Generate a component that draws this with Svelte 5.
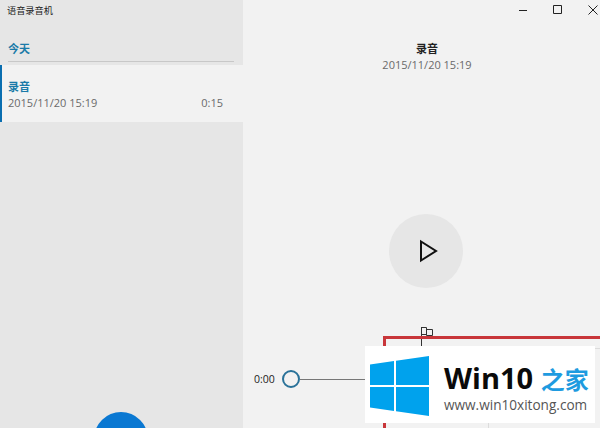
<script>
	const stamp = '2015/11/20 15:19';
</script>

<div class="app">
	<aside class="side">
		<div class="app-title">语音录音机</div>
		<div class="group">今天</div>
		<div class="item">
			<div class="item-name">录音</div>
			<div class="item-meta">
				<span>{stamp}</span>
				<span>0:15</span>
			</div>
		</div>
		<div class="record"></div>
	</aside>

	<main class="main">
		<div class="win-buttons">
			<svg width="12" height="12" viewBox="0 0 12 12"><path d="M2 6.500h8" stroke="#222" fill="none" /></svg>
			<svg width="12" height="12" viewBox="0 0 12 12"><path d="M1.500 1.500h8v8h-8z" stroke="#222" fill="none" /></svg>
			<svg width="12" height="12" viewBox="0 0 12 12"><path d="M1.500 1.500l9 9M10.500 1.500l-9 9" stroke="#222" fill="none" /></svg>
		</div>
		<div class="title">录音</div>
		<div class="date">{stamp}</div>
		<div class="play">
			<svg width="20" height="24" viewBox="0 0 20 24"><path d="M3 2.500v19L18 12z" stroke="#111" stroke-width="2" fill="none" /></svg>
		</div>
		<div class="timeline">
			<span class="time">0:00</span>
			<span class="knob"></span>
			<span class="line"></span>
		</div>
		<svg class="flag" width="14" height="20" viewBox="0 0 14 20"><path d="M1.500 1v19M1.500 1.500h5v7h-5M6.500 3.500h6v6h-6z" stroke="#333" fill="none" /></svg>
		<div class="selection">
			<div class="wave"></div>
		</div>
	</main>

	<div class="mark">
		<svg class="logo" width="60" height="60" viewBox="0 0 60 60">
			<path d="M0 8.500l24-3.500v24H0zM26 4.700L59 0v29H26zM0 31h24v24L0 51.500zM26 31h33v29l-33-4.700z" fill="#00a2ed" />
		</svg>
		<div class="mark-text">
			<div class="mark-name">Win10 <span>之家</span></div>
			<div class="mark-url">www.win10xitong.com</div>
		</div>
	</div>
</div>

<style>
	:global(body) {
		margin: 0;
	}

	.app {
		position: relative;
		display: grid;
		grid-template-columns: 243px 1fr;
		width: 600px;
		height: 428px;
		overflow: hidden;
		font-family: "Open Sans", "Noto Sans CJK SC", sans-serif;
		background: #f2f2f2;
	}

	.side {
		position: relative;
		background: #e6e6e6;
	}

	.app-title {
		padding: 3px 0 0 7px;
		height: 15px;
		font-size: 9.200px;
		line-height: 15px;
		color: #222;
	}

	.group {
		margin: 23px 9px 0 8px;
		height: 20px;
		border-bottom: 1px solid #c8c8c8;
		font-size: 11px;
		font-weight: 700;
		line-height: 16px;
		color: #1a7aa8;
	}

	.item {
		margin-top: 3px;
		height: 57px;
		padding: 13px 20px 0 6px;
		box-sizing: border-box;
		border-left: 2px solid #0a6eb0;
		background: #f2f2f2;
	}

	.item-name {
		font-size: 11px;
		font-weight: 700;
		line-height: 17px;
		color: #1a7aa8;
	}

	.item-meta {
		display: flex;
		justify-content: space-between;
		font-size: 11px;
		line-height: 16px;
		color: #6a6a6a;
	}

	.record {
		position: absolute;
		left: 94px;
		top: 412px;
		width: 54px;
		height: 54px;
		border-radius: 50%;
		background: #0a78d2;
	}

	.main {
		position: relative;
		display: flex;
		flex-direction: column;
		align-items: center;
	}

	.win-buttons {
		align-self: flex-end;
		display: flex;
		gap: 23px;
		padding: 4px 1px 0 0;
		height: 14px;
	}

	.title {
		margin: 23px 0 0 11px;
		font-size: 11px;
		font-weight: 700;
		line-height: 16px;
		color: #222;
	}

	.date {
		margin-left: 11px;
		font-size: 11px;
		line-height: 16px;
		color: #6a6a6a;
	}

	.play {
		display: flex;
		align-items: center;
		justify-content: center;
		margin: 141px 0 0 9px;
		width: 74px;
		height: 74px;
		border-radius: 50%;
		background: #e6e6e6;
		padding-left: 4px;
		box-sizing: border-box;
	}

	.timeline {
		align-self: stretch;
		display: flex;
		align-items: center;
		margin-top: 81px;
		padding: 0 100px 0 11px;
		height: 20px;
	}

	.time {
		width: 28px;
		font-size: 10.500px;
		color: #222;
	}

	.knob {
		width: 14px;
		height: 14px;
		border: 2px solid #2a7299;
		border-radius: 50%;
	}

	.line {
		flex: 1;
		height: 1px;
		background: #777;
	}

	.flag {
		position: absolute;
		left: 177px;
		top: 326px;
	}

	.selection {
		position: absolute;
		left: 140px;
		top: 336px;
		width: 300px;
		height: 140px;
		border: 3px solid #c8363a;
		box-sizing: border-box;
	}

	.wave {
		margin: 9px 0 0 102px;
		height: 100px;
		border-top: 1px solid #dcdcdc;
		border-left: 1px solid #dcdcdc;
	}

	.mark {
		position: absolute;
		left: 365px;
		top: 346px;
		display: flex;
		align-items: center;
		gap: 14px;
		box-sizing: border-box;
		width: 230px;
		height: 77px;
		padding-left: 5px;
		background: #fff;
	}

	.logo {
		flex: none;
		margin-top: 2px;
	}

	.mark-text {
		margin-top: 5px;
	}

	.mark-name {
		font-size: 29px;
		font-weight: 700;
		line-height: 34px;
		color: #0a0a0a;
		white-space: nowrap;
	}

	.mark-name span {
		color: #1e9be0;
		font-size: 24px;
	}

	.mark-url {
		font-size: 13.600px;
		line-height: 16px;
		color: #555;
		white-space: nowrap;
	}
</style>
